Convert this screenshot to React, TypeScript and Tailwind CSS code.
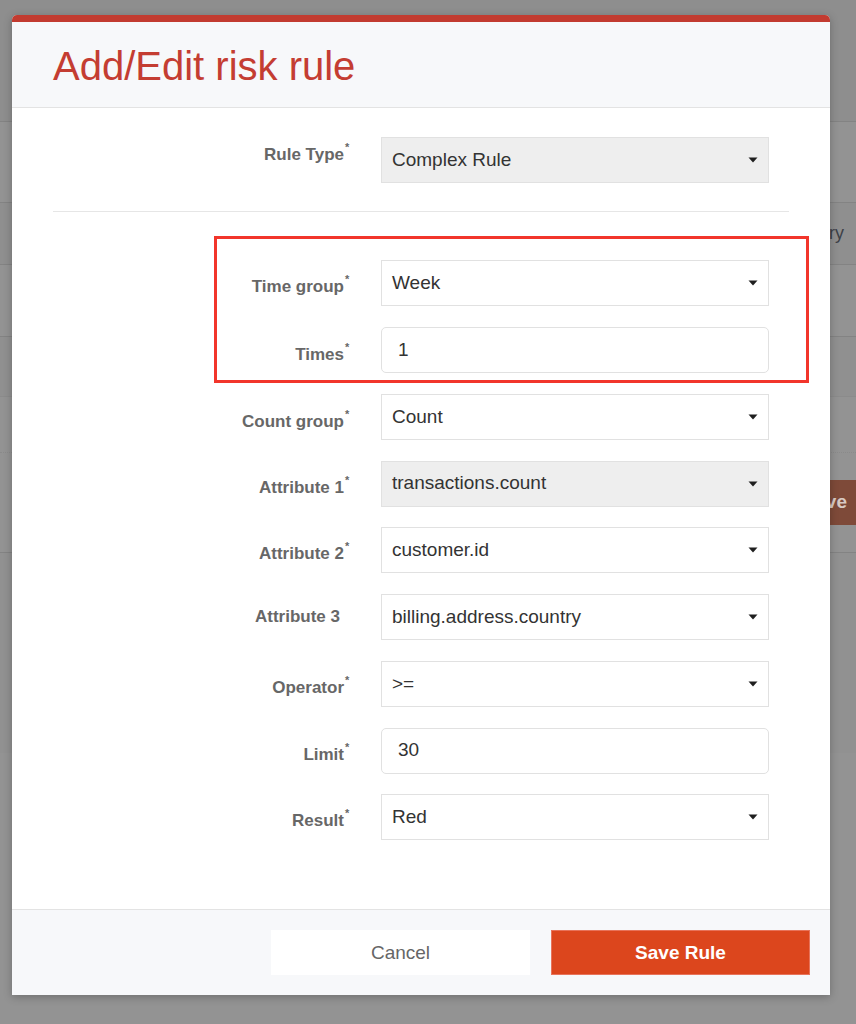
type Field = {
  label: string;
  value: string;
  kind: "select" | "input";
  required?: boolean;
  disabled?: boolean;
  labelPad: string;
};

const groupFields: Field[] = [
  { label: "Time group", value: "Week", kind: "select", required: true, labelPad: "pt-[15px]" },
  { label: "Times", value: "1", kind: "input", required: true, labelPad: "pt-[16px]" },
];

const restFields: Field[] = [
  { label: "Count group", value: "Count", kind: "select", required: true, labelPad: "pt-[16px]" },
  { label: "Attribute 1", value: "transactions.count", kind: "select", required: true, disabled: true, labelPad: "pt-[15px]" },
  { label: "Attribute 2", value: "customer.id", kind: "select", required: true, labelPad: "pt-[15px]" },
  { label: "Attribute 3", value: "billing.address.country", kind: "select", labelPad: "pt-[11px]" },
  { label: "Operator", value: ">=", kind: "select", required: true, labelPad: "pt-[15px]" },
  { label: "Limit", value: "30", kind: "input", required: true, labelPad: "pt-[15px]" },
  { label: "Result", value: "Red", kind: "select", required: true, labelPad: "pt-[15px]" },
];

function Caret() {
  return (
    <svg width="10" height="6" viewBox="0 0 10 6" className="shrink-0">
      <path d="M0.5 0.5 L9.5 0.5 L5 5.5 Z" fill="#1f1f1f" />
    </svg>
  );
}

function FormRow({ field }: { field: Field }) {
  return (
    <div className="flex items-start gap-[29px]">
      <div className={`w-[299px] text-right ${field.labelPad}`}>
        <span className="text-[17px] leading-[20px] font-bold text-[#676767]">{field.label}</span>
        {field.required ? (
          <span className="relative -top-[9px] inline-block w-[8px] pl-[1px] text-left text-[11px] leading-none font-bold text-[#676767]">
            *
          </span>
        ) : (
          <span className="inline-block w-[12px]" />
        )}
      </div>
      {field.kind === "select" ? (
        <div
          className={`flex h-[46px] w-[388px] items-center justify-between border border-[#e1e1e1] pl-[10px] pr-[10px] ${
            field.disabled ? "bg-[#eeeeee]" : "bg-white"
          }`}
        >
          <span className="text-[19px] text-[#333333]">{field.value}</span>
          <Caret />
        </div>
      ) : (
        <div className="flex h-[46px] w-[388px] items-center rounded-[5px] border border-[#e1e1e1] bg-white pl-[16px]">
          <span className="text-[19px] text-[#333333]">{field.value}</span>
        </div>
      )}
    </div>
  );
}

export default function App() {
  return (
    <div className="relative h-[1024px] w-full overflow-hidden bg-[#939393] font-['Liberation_Sans',Arial,sans-serif]">
      {/* page behind the overlay */}
      <div className="flex flex-col">
        <div className="h-[122px] border-b border-[#838383] bg-[#8e8e8e]" />
        <div className="h-[81px] border-b border-[#838383]" />
        <div className="flex h-[62px] items-center justify-end border-b border-[#838383] bg-[#8f8f8f] pr-[12px]">
          <span className="text-[18px] text-[#3d4148]">Country</span>
        </div>
        <div className="h-[72px] border-b border-[#838383]" />
        <div className="h-[60px] border-b border-[#8b8b8b] bg-[#909090]" />
        <div className="h-[56px] border-b border-dotted border-[#8a8a8a]" />
        <div className="flex h-[100px] items-center justify-end border-b border-[#838383]">
          <div className="-mr-[20px] flex h-[45px] items-center bg-[#7e4a39] px-[29px] text-[19px] font-bold text-[#d8c9c3]">
            Save
          </div>
        </div>
        <div className="h-[200px] bg-[#919191]" />
      </div>

      {/* modal */}
      <div className="absolute left-[12px] top-[15px] w-[818px] overflow-hidden rounded-t-[5px] bg-white shadow-[0_2px_8px_rgba(0,0,0,0.25)]">
        <div className="h-[7px] bg-[#c23b30]" />
        <div className="h-[86px] border-b border-[#e3e3e3] bg-[#f7f8fa] pl-[41px] pt-[20px]">
          <h1 className="text-[40px] leading-[48px] font-normal text-[#c43d32]">Add/Edit risk rule</h1>
        </div>

        <div className="px-[41px] pb-[69px] pt-[29px]">
          <FormRow
            field={{ label: "Rule Type", value: "Complex Rule", kind: "select", required: true, disabled: true, labelPad: "pt-[6px]" }}
          />
          <div className="mt-[28px] h-px bg-[#e6e6e6]" />

          <div className="relative mt-[48px] flex flex-col gap-[21px]">
            <div className="pointer-events-none absolute -bottom-[10px] left-[161px] -right-[20px] -top-[24px] border-[3px] border-[#f2352b]" />
            {groupFields.map((f) => (
              <FormRow key={f.label} field={f} />
            ))}
          </div>

          <div className="mt-[20.75px] flex flex-col gap-[20.75px]">
            {restFields.map((f) => (
              <FormRow key={f.label} field={f} />
            ))}
          </div>
        </div>

        <div className="flex justify-end gap-[21px] border-t border-[#e3e3e3] bg-[#f7f8fa] px-[20px] pb-[20px] pt-[20px]">
          <button className="h-[45px] w-[259px] bg-white text-[19px] text-[#666666]">Cancel</button>
          <button className="h-[45px] w-[259px] border border-[#e8735a] bg-[#dc461d] text-[19px] font-bold text-white">
            Save Rule
          </button>
        </div>
      </div>
    </div>
  );
}
